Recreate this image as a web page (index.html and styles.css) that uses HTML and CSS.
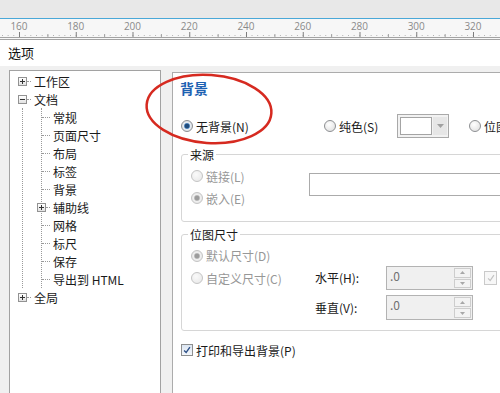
FILE: index.html
```html
<!DOCTYPE html>
<html lang="zh-CN">
<head>
  <meta charset="UTF-8" />
  <title>选项</title>
  <link rel="stylesheet" href="styles.css">
</head>
<body>
  <div class="topbar"></div>

  <div class="ruler">
    <div class="ruler-labels">
      <span>160</span><span>180</span><span>200</span><span>220</span><span>240</span>
      <span>260</span><span>280</span><span>300</span><span>320</span>
    </div>
    <div class="ticks"></div>
  </div>

  <div class="title">选项</div>

  <div class="dialog">
    <!-- left tree -->
    <div class="tree">
      <div class="node"><span class="exp plus"></span><span class="stub"></span><span>工作区</span></div>
      <div class="node"><span class="exp"></span><span class="stub"></span><span>文档</span></div>
      <div class="branch">
        <div class="children">
          <div class="leaf"><span class="stub long"></span><span>常规</span></div>
          <div class="leaf"><span class="stub long"></span><span>页面尺寸</span></div>
          <div class="leaf"><span class="stub long"></span><span>布局</span></div>
          <div class="leaf"><span class="stub long"></span><span>标签</span></div>
          <div class="leaf"><span class="stub long"></span><span>背景</span></div>
          <div class="leaf"><span class="exp plus inner"></span><span class="stub"></span><span>辅助线</span></div>
          <div class="leaf"><span class="stub long"></span><span>网格</span></div>
          <div class="leaf"><span class="stub long"></span><span>标尺</span></div>
          <div class="leaf"><span class="stub long"></span><span>保存</span></div>
          <div class="leaf last"><span class="stub long"></span><span>导出到 HTML</span></div>
        </div>
      </div>
      <div class="node"><span class="exp plus"></span><span class="stub"></span><span>全局</span></div>
    </div>

    <!-- right page -->
    <div class="page">
      <h2 class="heading">背景</h2>

      <div class="choice-row">
        <label class="opt w1"><span class="radio on"></span>无背景(N)</label>
        <label class="opt w2"><span class="radio"></span>纯色(S)</label>
        <div class="color-pick">
          <span class="swatch"></span>
          <span class="drop"><svg width="7" height="4" viewBox="0 0 7 4"><path d="M0 0 H7 L3.5 4 Z" fill="#a0a0a0"/></svg></span>
        </div>
        <label class="opt"><span class="radio"></span>位图</label>
      </div>

      <fieldset class="group source">
        <legend>来源</legend>
        <div class="source-body">
          <div class="source-opts">
            <label class="opt off"><span class="radio dis"></span>链接(L)</label>
            <label class="opt off"><span class="radio dis on"></span>嵌入(E)</label>
          </div>
          <div class="path-box"></div>
        </div>
      </fieldset>

      <fieldset class="group size">
        <legend>位图尺寸</legend>
        <div class="size-grid">
          <label class="opt off"><span class="radio dis on"></span>默认尺寸(D)</label>
          <span></span><span></span><span></span><span></span>

          <label class="opt off"><span class="radio dis"></span>自定义尺寸(C)</label>
          <span class="field-label">水平(H):</span>
          <div class="spin">
            <span class="spin-val">.0</span>
            <span class="spin-btns">
              <i><svg width="5" height="3" viewBox="0 0 5 3"><path d="M0 3 H5 L2.5 0 Z" fill="#a8a8a8"/></svg></i>
              <i><svg width="5" height="3" viewBox="0 0 5 3"><path d="M0 0 H5 L2.5 3 Z" fill="#a8a8a8"/></svg></i>
            </span>
          </div>
          <span></span>
          <span class="check dis"><svg viewBox="0 0 12 12" width="10" height="10"><path d="M2.5 6.5 L5 9 L9.5 2.5" fill="none" stroke="#c2c2c2" stroke-width="1.4"/></svg></span>

          <span></span>
          <span class="field-label low">垂直(V):</span>
          <div class="spin low">
            <span class="spin-val">.0</span>
            <span class="spin-btns">
              <i><svg width="5" height="3" viewBox="0 0 5 3"><path d="M0 3 H5 L2.5 0 Z" fill="#a8a8a8"/></svg></i>
              <i><svg width="5" height="3" viewBox="0 0 5 3"><path d="M0 0 H5 L2.5 3 Z" fill="#a8a8a8"/></svg></i>
            </span>
          </div>
          <span></span><span></span>
        </div>
      </fieldset>

      <label class="opt print"><span class="check"><svg viewBox="0 0 12 12" width="10" height="10"><path d="M2.5 6.5 L5 9 L9.5 2.5" fill="none" stroke="#2c4f86" stroke-width="1.6"/></svg></span>打印和导出背景(P)</label>
    </div>
  </div>

  <svg class="mark" width="150" height="90" viewBox="0 0 150 90">
    <ellipse cx="70" cy="42" rx="62.5" ry="34" transform="rotate(4 70 42)" fill="none" stroke="#d62a20" stroke-width="2.5"/>
  </svg>
</body>
</html>
```

FILE: styles.css
```css
* {
  margin: 0;
  padding: 0;
  box-sizing: border-box;
}

html, body {
  width: 500px;
  height: 393px;
  overflow: hidden;
}

body {
  position: relative;
  display: flex;
  flex-direction: column;
  font-family: "Noto Sans CJK SC", "Noto Sans", sans-serif;
  font-size: 12px;
  color: #1a1a1a;
  background: #fff;
}

.topbar {
  height: 19px;
  flex-shrink: 0;
  background: #e8e8e8;
  border-bottom: 1px solid #4aa8d8;
}

.ruler {
  height: 21px;
  flex-shrink: 0;
  display: flex;
  flex-direction: column;
  background: #f7f7f7;
  border-bottom: 3px double #a3a3a3;
}

.ruler-labels {
  display: flex;
  height: 13px;
  padding-top: 1px;
  margin-left: -9.4px;
  font-family: "Open Sans", sans-serif;
  font-size: 10px;
  line-height: 12px;
  color: #8a8a8a;
}

.ruler-labels span {
  width: 56.75px;
  flex-shrink: 0;
  text-align: center;
}

.ticks {
  height: 5px;
  background:
    linear-gradient(to right, #7d7d7d 1px, transparent 1px) 19px 0 / 56.75px 5px repeat-x,
    linear-gradient(to right, #a0a0a0 1px, transparent 1px) 47.4px 2px / 56.75px 3px repeat-x,
    linear-gradient(to right, #b0b0b0 1px, transparent 1px) 19px 3px / 5.675px 1px repeat-x;
}

.title {
  height: 26px;
  flex-shrink: 0;
  padding-left: 8px;
  line-height: 26px;
  font-size: 13px;
  color: #111;
}

.dialog {
  flex: 1;
  display: flex;
  gap: 11px;
  padding: 4px 0 0 9px;
  background: #f0f0f0;
}

/* tree */
.tree {
  width: 152px;
  flex-shrink: 0;
  padding-top: 1px;
  background: #fff;
  border: 1px solid #a2a2a2;
  border-bottom: none;
}

.node, .leaf {
  height: 18px;
  display: flex;
  align-items: center;
  white-space: nowrap;
}

.node {
  padding-left: 8px;
}

.exp {
  width: 9px;
  height: 9px;
  flex-shrink: 0;
  border: 1px solid #929292;
  background:
    linear-gradient(#333, #333) center / 5px 1px no-repeat,
    linear-gradient(#fff, #e2e2e2);
}

.exp.plus {
  background:
    linear-gradient(#333, #333) center / 5px 1px no-repeat,
    linear-gradient(#333, #333) center / 1px 5px no-repeat,
    linear-gradient(#fff, #e2e2e2);
}

.exp.inner {
  margin-left: -5px;
}

.stub {
  width: 4px;
  margin-right: 3px;
  border-top: 1px dotted #9a9a9a;
}

.stub.long {
  width: 8px;
}

.branch {
  margin-left: 12px;
  border-left: 1px dotted #9a9a9a;
}

.children {
  margin-left: 18px;
  border-left: 1px dotted #9a9a9a;
}

/* page */
.page {
  width: 360px;
  flex-shrink: 0;
  margin-top: 2px;
  padding: 5px 0 0 8px;
  background: #fff;
  border: 1px solid #acacac;
  border-bottom: none;
}

.heading {
  height: 20px;
  line-height: 20px;
  margin-left: -1px;
  font-size: 14px;
  font-weight: bold;
  color: #1d62b2;
}

.opt {
  display: flex;
  align-items: center;
  gap: 3px;
  white-space: nowrap;
}

.opt.off {
  color: #979797;
}

.radio {
  width: 12px;
  height: 12px;
  flex-shrink: 0;
  border: 1px solid #8d8f92;
  border-radius: 50%;
  background: radial-gradient(circle at 40% 35%, #fff, #dcdcdc);
}

.radio.on {
  background: radial-gradient(circle, #1f4b7c 0 2px, #4c83bb 2.5px, #e6ebf0 3.5px, #cfd6dd);
}

.radio.dis {
  border-color: #c4c4c4;
  background: radial-gradient(circle at 40% 35%, #fafafa, #e6e6e6);
}

.radio.dis.on {
  background: radial-gradient(circle, #9c9c9c 0 2px, #b9b9b9 2.5px, #efefef 3.5px, #e0e0e0);
}

.choice-row {
  display: flex;
  align-items: center;
  height: 24px;
  margin-top: 16px;
}

.w1 {
  width: 143px;
}

.w2 {
  width: 73px;
}

.color-pick {
  display: flex;
  width: 52px;
  height: 24px;
  margin-right: 20px;
  padding: 2px 1px 2px 2px;
  gap: 1px;
  background: #f2f2f2;
  border: 1px solid #a9a9a9;
}

.swatch {
  flex: 1;
  background: #fff;
  border: 1px solid #a4a4a4;
}

.drop {
  width: 14px;
  display: flex;
  align-items: center;
  justify-content: center;
  background: #e6e6e6;
}

.group {
  width: 345px;
  padding: 0 0 0 9px;
  border: 1px solid #d6d6d6;
  border-radius: 3px;
}

.group legend {
  margin-left: -3px;
  padding: 0 2px;
  line-height: 17px;
  font-size: 12px;
}

.source {
  margin-top: 8px;
  padding-top: 2px;
  padding-bottom: 12px;
}

.source-body {
  display: flex;
  align-items: flex-start;
}

.source-opts {
  width: 118px;
}

.source-opts .opt {
  height: 22px;
}

.path-box {
  width: 220px;
  height: 23px;
  margin-top: 8px;
  background: #fff;
  border: 1px solid #ababab;
}

.size {
  margin-top: 4px;
  padding-top: 2px;
  padding-bottom: 10px;
}

.size-grid {
  display: grid;
  grid-template-columns: 124px 71px 87px 11px 12px;
  grid-template-rows: 21px 24px 30px;
  align-items: center;
}

.field-label {
  line-height: 24px;
  white-space: nowrap;
}

.low {
  align-self: end;
}

.spin {
  display: flex;
  height: 24px;
  background: #f0f0f0;
  border: 1px solid #b3b3b3;
}

.spin.low {
  height: 25px;
}

.spin-val {
  flex: 1;
  padding: 1px 0 0 3px;
  line-height: 16px;
  color: #707070;
}

.spin-btns {
  width: 18px;
  display: flex;
  flex-direction: column;
  gap: 1px;
  padding: 1px 1px 1px 0;
}

.spin-btns i {
  flex: 1;
  display: flex;
  align-items: center;
  justify-content: center;
  border: 1px solid #cdcdcd;
  background: #f3f3f3;
}

.check {
  width: 12px;
  height: 12px;
  flex-shrink: 0;
  display: flex;
  align-items: center;
  justify-content: center;
  border: 1px solid #8e8f8f;
  background: linear-gradient(#dce6f2, #f4f7fb);
}

.check.dis {
  width: 13px;
  height: 14px;
  border-color: #cacaca;
  background: #f7f7f7;
}

.print {
  height: 22px;
  margin-top: 8px;
}

.mark {
  position: absolute;
  left: 139px;
  top: 67px;
}
```
